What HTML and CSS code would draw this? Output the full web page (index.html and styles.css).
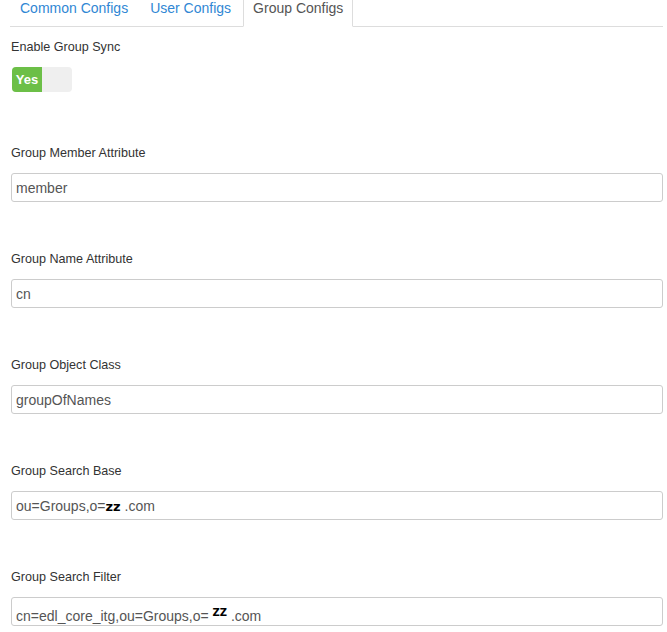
FILE: index.html
```html
<!DOCTYPE html>
<html lang="en">
<head>
    <meta charset="UTF-8">
    <meta name="viewport" content="width=device-width, initial-scale=1.0">
    <title>Group Configs</title>
    <link rel="stylesheet" href="styles.css">
</head>
<body>
    <div class="container">
        <ul class="tabs">
            <li class="tab">Common Configs</li>
            <li class="tab">User Configs</li>
            <li class="tab active">Group Configs</li>
        </ul>
        <div class="form">
            <div class="group switch-group">
                <label class="label">Enable Group Sync</label>
                <div class="switch">
                    <span class="switch-on">Yes</span>
                    <span class="switch-off"></span>
                </div>
            </div>
            <div class="group">
                <label class="label">Group Member Attribute</label>
                <div class="field">member</div>
            </div>
            <div class="group">
                <label class="label">Group Name Attribute</label>
                <div class="field">cn</div>
            </div>
            <div class="group">
                <label class="label">Group Object Class</label>
                <div class="field">groupOfNames</div>
            </div>
            <div class="group">
                <label class="label">Group Search Base</label>
                <div class="field">ou=Groups,o=<span class="mask">zz</span> .com</div>
            </div>
            <div class="group">
                <label class="label">Group Search Filter</label>
                <div class="field">cn=edl_core_itg,ou=Groups,o= <span class="mask mask-up">ZZ</span> .com</div>
            </div>
        </div>
    </div>
</body>
</html>
```

FILE: styles.css
```css
body {
    margin: 0;
    font-family: "Liberation Sans", Arial, sans-serif;
    background-color: #fff;
    color: #333;
}
.container {
    padding: 0 4px 0 10px;
}

.tabs {
    display: flex;
    list-style: none;
    margin: -2px 0 0 0;
    padding: 0;
    border-bottom: 1px solid #ddd;
}
.tab {
    font-size: 14px;
    line-height: 20px;
    padding: 0 9px 8px;
    margin-right: 2px;
    margin-bottom: -1px;
    border: 1px solid transparent;
    border-top: 0;
    color: #3087d4;
}
.tab.active {
    color: #555;
    background-color: #fff;
    border-color: #ddd;
    border-bottom-color: transparent;
}

.form {
    padding: 10px 0 0 1px;
}
.group {
    margin-bottom: 47px;
}
.switch-group {
    margin-bottom: 51px;
}
.label {
    display: block;
    font-size: 12.6px;
    line-height: 18px;
    padding-top: 1px;
    margin-bottom: 11px;
    color: #333;
}

.switch {
    display: flex;
    width: 60px;
    height: 25px;
    margin-left: 1px;
    border-radius: 4px;
    overflow: hidden;
    background-color: #efefef;
}
.switch-on {
    width: 30px;
    background-color: #6cbf47;
    color: #fff;
    font-size: 13px;
    font-weight: bold;
    line-height: 25px;
    text-align: center;
}

.field {
    box-sizing: border-box;
    height: 29px;
    border: 1px solid #ccc;
    border-radius: 3px;
    padding: 1px 4px 0;
    font-size: 14px;
    line-height: 27px;
    color: #555;
    white-space: nowrap;
}
.mask {
    font-family: "DejaVu Sans", sans-serif;
    font-weight: bold;
    font-size: 13px;
    color: #000;
}
.mask-up {
    font-size: 10px;
    vertical-align: 5px;
}
```
